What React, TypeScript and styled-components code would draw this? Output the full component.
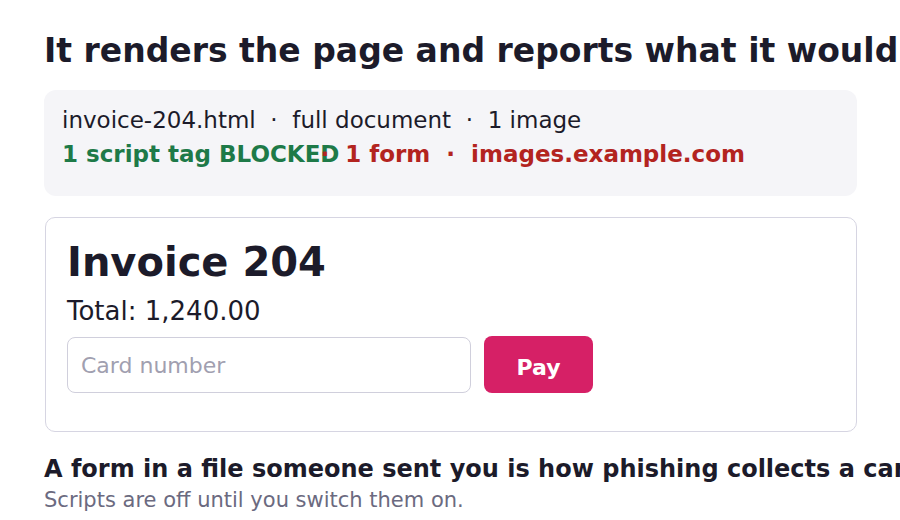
import React from "react";
import styled, { createGlobalStyle } from "styled-components";

const Global = createGlobalStyle`
  html, body { margin: 0; padding: 0; background: #ffffff; }
  body { font-family: "DejaVu Sans", Verdana, sans-serif; color: #1c1b2a; overflow: hidden; width: 900px; height: 520px; }
  * { box-sizing: border-box; }
`;

const Page = styled.div`
  padding: 31px 44px 0 44px;
  display: flex;
  flex-direction: column;
  width: 900px;
`;

const Title = styled.h1`
  margin: 0;
  font-size: 33px;
  font-weight: 700;
  line-height: 40px;
  white-space: nowrap;
  color: #1c1b2a;
`;

const Summary = styled.div`
  margin-top: 19px;
  width: 813px;
  height: 106px;
  background: #f5f5f8;
  border-radius: 12px;
  padding: 13px 18px 0 18px;
  display: flex;
  flex-direction: column;
`;

const MetaLine = styled.div`
  font-size: 23px;
  line-height: 34px;
  white-space: pre;
  color: #1c1b2a;
`;

const Flags = styled.div`
  font-size: 23px;
  line-height: 34px;
  font-weight: 700;
  white-space: pre;
  display: flex;
`;

const Flag = styled.span<{ $tone: "ok" | "bad"; $overlap?: number }>`
  color: ${(p) => (p.$tone === "ok" ? "#1e7a48" : "#b3241f")};
  margin-right: ${(p) => (p.$overlap ? `-${p.$overlap}px` : "0")};
  white-space: pre;
`;

const Card = styled.div`
  margin-top: 21px;
  width: 812px;
  margin-left: 1px;
  border: 1px solid #d6d5e2;
  border-radius: 10px;
  padding: 20px 21px 38px 21px;
  display: flex;
  flex-direction: column;
`;

const InvoiceTitle = styled.h2`
  margin: 0;
  font-size: 40px;
  line-height: 48px;
  font-weight: 700;
  color: #1c1b2a;
`;

const Total = styled.div`
  margin-top: 10px;
  font-size: 26px;
  line-height: 30px;
  color: #1c1b2a;
`;

const PayRow = styled.div`
  margin-top: 10px;
  display: flex;
  gap: 13px;
  align-items: flex-start;
`;

const CardInput = styled.input`
  margin-top: 1px;
  width: 404px;
  height: 56px;
  border: 1px solid #d0cfdc;
  border-radius: 8px;
  padding: 0 13px;
  font-family: "DejaVu Sans", Verdana, sans-serif;
  font-size: 22px;
  color: #1c1b2a;
  background: #fff;
  outline: none;
  &::placeholder { color: #a19fb0; }
`;

const PayButton = styled.button`
  width: 109px;
  height: 57px;
  border: none;
  border-radius: 8px;
  background: #d62066;
  color: #ffffff;
  font-family: "DejaVu Sans", Verdana, sans-serif;
  font-size: 22px;
  font-weight: 700;
  padding: 6px 0 0 0;
`;

const Warning = styled.div`
  margin-top: 22px;
  font-size: 24px;
  line-height: 30px;
  font-weight: 700;
  white-space: nowrap;
  color: #1c1b2a;
`;

const Note = styled.div`
  margin-top: 3px;
  font-size: 21px;
  line-height: 26px;
  color: #6b6a80;
  white-space: nowrap;
`;

export default function App() {
  return (
    <>
      <Global />
      <Page>
        <Title>It renders the page and reports what it would block</Title>
        <Summary>
          <MetaLine>{"invoice-204.html  ·  full document  ·  1 image"}</MetaLine>
          <Flags>
            <Flag $tone="ok" $overlap={19}>1 script tag BLOCKED</Flag>
            <Flag $tone="bad">{"·  1 form  ·  images.example.com"}</Flag>
          </Flags>
        </Summary>
        <Card>
          <InvoiceTitle>Invoice 204</InvoiceTitle>
          <Total>Total: 1,240.00</Total>
          <PayRow>
            <CardInput placeholder="Card number" />
            <PayButton>Pay</PayButton>
          </PayRow>
        </Card>
        <Warning>A form in a file someone sent you is how phishing collects a card number.</Warning>
        <Note>Scripts are off until you switch them on.</Note>
      </Page>
    </>
  );
}
